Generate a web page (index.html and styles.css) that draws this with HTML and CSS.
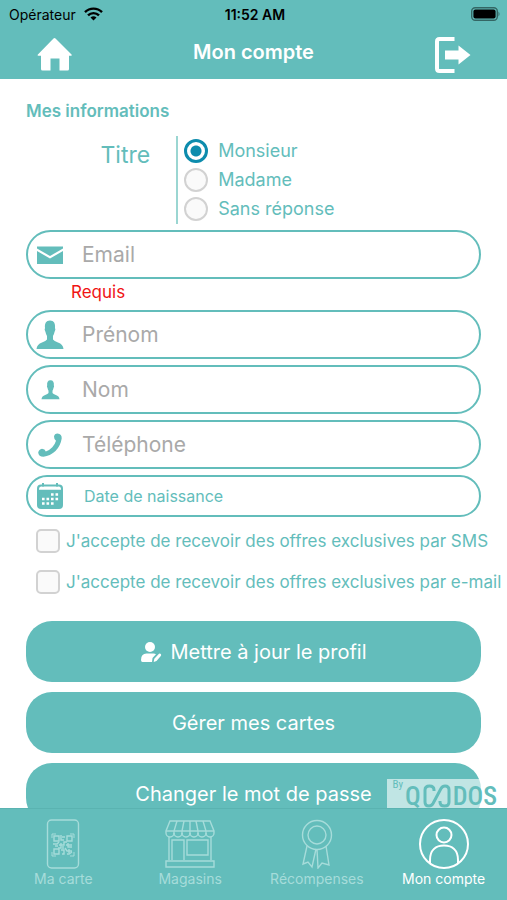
FILE: index.html
```html
<!DOCTYPE html>
<html lang="fr">
<head>
    <meta charset="UTF-8">
    <meta name="viewport" content="width=device-width, initial-scale=1.0">
    <title>Mon compte</title>
    <link rel="stylesheet" href="styles.css">
</head>
<body>

    <header class="header">
        <div class="status-bar">
            <span class="carrier">Opérateur
                <svg width="19" height="14" viewBox="0 0 19 14" aria-hidden="true">
                    <g fill="none" stroke="#000" stroke-width="2.4">
                        <path d="M1 5.2a12 12 0 0 1 17 0"/>
                        <path d="M4 8.4a7.8 7.8 0 0 1 11 0"/>
                    </g>
                    <path d="M9.500 13.600l-3-3a4.300 4.300 0 0 1 6 0z"/>
                </svg>
            </span>
            <span class="time">11:52 AM</span>
            <span class="battery">
                <svg width="30" height="14" viewBox="0 0 30 14" aria-hidden="true">
                    <rect x="0.700" y="0.700" width="25.600" height="12.600" rx="3.500" fill="none" stroke="#346664" stroke-width="1.400"/>
                    <rect x="2.400" y="2.400" width="22.200" height="9.200" rx="2"/>
                    <path d="M27.500 4.500q2 2.500 0 5z" fill="#346664"/>
                </svg>
            </span>
        </div>
        <div class="title-bar">
            <a href="#" class="title-link" aria-label="Accueil">
                <svg width="36" height="36" viewBox="0 0 36 36" fill="#fff">
                    <path d="M19.500 1.500L35.500 17.500q1 1.200-.6 1.200H33V32q0 1.500-1.500 1.500H23.500V21.500H14.500V33.500H6.500q-1.500 0-1.500-1.500V18.700H2.500q-1.600 0-.6-1.200L17.500 1.500q1-1 2 0z"/>
                </svg>
            </a>
            <h1>Mon compte</h1>
            <a href="#" class="title-link" aria-label="Déconnexion">
                <svg width="36" height="36" viewBox="0 0 36 36" fill="#fff">
                    <path d="M19.500 2H4.500Q2 2 2 4.500V31.500Q2 34 4.500 34H19.500" fill="none" stroke="#fff" stroke-width="4"/>
                    <path d="M10 13.500H23.500V8.500L35.500 18L23.500 27.500V22.500H10z"/>
                </svg>
            </a>
        </div>
    </header>

    <main class="content">
        <form id="profileForm">
            <h2>Mes informations</h2>

            <div class="title-group" role="radiogroup" aria-labelledby="titre">
                <span id="titre" class="group-label">Titre</span>
                <div class="radios">
                    <label><input type="radio" name="titre" checked>Monsieur</label>
                    <label><input type="radio" name="titre">Madame</label>
                    <label><input type="radio" name="titre">Sans réponse</label>
                </div>
            </div>

            <div class="field">
                <label for="email" aria-label="Email">
                    <svg width="28" height="28" viewBox="0 0 28 28">
                        <path d="M1 5.500H27V7.500L14 15L1 7.500z"/>
                        <path d="M1 10L14 17.500L27 10V23H1z"/>
                    </svg>
                </label>
                <input type="email" id="email" placeholder="Email">
            </div>
            <p class="error">Requis</p>

            <div class="field">
                <label for="firstName" aria-label="Prénom">
                    <svg width="28" height="30" viewBox="0 0 28 30">
                        <path d="M14 .5C18 .5 19.500 3.500 19 8Q20 9.500 18.500 12Q18 14.500 17 16V19.500Q18 21.200 22 22.500Q27 24 27.500 29H.5Q1 24 6 22.500Q10 21.200 11 19.500V16Q10 14.500 9.500 12Q8 9.500 9 8C8.500 3.500 10 .5 14 .5z"/>
                    </svg>
                </label>
                <input type="text" id="firstName" placeholder="Prénom">
            </div>

            <div class="field">
                <label for="lastName" aria-label="Nom">
                    <svg width="19" height="20" viewBox="0 0 28 30">
                        <path d="M14 .5C18 .5 19.500 3.500 19 8Q20 9.500 18.500 12Q18 14.500 17 16V19.500Q18 21.200 22 22.500Q27 24 27.500 29H.5Q1 24 6 22.500Q10 21.200 11 19.500V16Q10 14.500 9.500 12Q8 9.500 9 8C8.500 3.500 10 .5 14 .5z"/>
                    </svg>
                </label>
                <input type="text" id="lastName" placeholder="Nom">
            </div>

            <div class="field">
                <label for="phone" aria-label="Téléphone">
                    <svg width="26" height="26" viewBox="0 0 26 26">
                        <path d="M17 4.500Q17.500 1.500 20.500 1.500Q25 2 24.700 6.500Q23.500 14 18.500 19Q13 24 6.500 24.700Q1.500 24.700 1.200 20.500Q2 17.200 5 16.800Q8 17 8.800 19.500Q12.500 18.300 15.300 15.300Q18 12.300 19 8.700Q17 7.500 17 4.500z"/>
                    </svg>
                </label>
                <input type="tel" id="phone" placeholder="Téléphone">
            </div>

            <div class="field field-date">
                <label for="birthDate" aria-label="Date de naissance">
                    <svg width="26" height="26" viewBox="0 0 26 26">
                        <rect y="1.500" width="26" height="24.500" rx="4"/>
                        <path d="M2 6.800Q2 3.500 4.500 3.500H21.500Q24 3.500 24 6.800z" fill="#fff"/>
                        <path d="M6 0V3.500M20 0V3.500" stroke="#63bdbb" stroke-width="2"/>
                        <path d="M14 11.500h8M5 16h17M5 20.500h12.500" stroke="#fff" stroke-width="2.600" stroke-dasharray="2.600 1.900"/>
                    </svg>
                </label>
                <input type="text" id="birthDate" placeholder="Date de naissance">
            </div>

            <label class="check"><input type="checkbox">J'accepte de recevoir des offres exclusives par SMS</label>
            <label class="check"><input type="checkbox">J'accepte de recevoir des offres exclusives par e-mail</label>

            <div class="actions">
                <button type="submit">
                    <svg width="22" height="22" viewBox="0 0 22 22" fill="#fff" aria-hidden="true">
                        <circle cx="10" cy="6" r="5"/>
                        <path d="M1 19Q1 12.500 6.500 12.500H13.500Q15 12.500 16 13.200L12.500 17L12 21H2.500Q1 21 1 19z"/>
                        <path d="M13.700 21L14.300 17.800L19 12.800Q20 12 20.800 13Q21.600 14 20.800 15L16.500 20z"/>
                    </svg>
                    Mettre à jour le profil
                </button>
                <button type="button">Gérer mes cartes</button>
                <button type="button">Changer le mot de passe</button>
            </div>
        </form>

        <div class="brand">
            <span class="brand-by">By</span>
            <span>Q</span>
            <svg width="28" height="24" viewBox="0 0 28 24" aria-hidden="true">
                <path d="M11 7V6Q11 2 6.500 2Q2 2 2 6V18Q2 22 6 22Q8.500 22 10 19.500L18 4.500Q19.500 2 22 2Q26 2 26 6V18Q26 22 21.500 22Q17 22 17 18V17" fill="none" stroke="#63bdbb" stroke-width="3"/>
            </svg>
            <span>DOS</span>
        </div>
    </main>

    <nav class="tabs">
        <a href="#">
            <svg width="50" height="50" viewBox="0 0 50 50" aria-hidden="true">
                <rect x="9.500" y="1" width="31" height="48" rx="4"/>
                <path d="M14 19V15H18M32 15H36V19M36 33V37H32M18 37H14V33" stroke-width="1"/>
                <path d="M16 17h5v5h-5zM29 17h5v5h-5zM16 30h5v5h-5z"/>
                <path d="M23 16v5h3M24 18h3M15 25h4l2-2M21 26h5v-3h3M23 24v5h-3M28 26h6M30 24v4h4M23 31h3v4h-2M27 29l2 3h5M29 35h2l3-2M31 30v4M17 27h3M25 27v3"/>
            </svg>
            Ma carte
        </a>
        <a href="#">
            <svg width="50" height="50" viewBox="0 0 50 50" aria-hidden="true">
                <path d="M5 2H45L49 12V14A4 4 0 0 1 41 14A4 4 0 0 1 33 14A4 4 0 0 1 25 14A4 4 0 0 1 17 14A4 4 0 0 1 9 14A4 4 0 0 1 1 14V12z"/>
                <path d="M1 12H49M12 2L9 12V15M19 2L17 12V15M25 2V15M31 2L33 12V15M38 2L41 12V15"/>
                <path d="M4 18V41M46 18V41M7 41V21H19V41M22 21H43V36H22zM1 42H49V48H1z"/>
            </svg>
            Magasins
        </a>
        <a href="#">
            <svg width="50" height="50" viewBox="0 0 50 50" aria-hidden="true">
                <circle cx="25" cy="16" r="14.500"/>
                <circle cx="25" cy="16" r="9"/>
                <path d="M15 27L11 45L16 43L20 48L24 30M25 30L26 49L30 44L37 46L34 27"/>
            </svg>
            Récompenses
        </a>
        <a href="#" class="active">
            <svg width="50" height="50" viewBox="0 0 50 50" aria-hidden="true">
                <circle cx="25" cy="25" r="24"/>
                <circle cx="25" cy="16" r="7.500"/>
                <path d="M11 44.500V41C11 31 17 26.500 25 26.500S39 31 39 41V44.500"/>
            </svg>
            Mon compte
        </a>
    </nav>

</body>
</html>
```

FILE: styles.css
```css
* {
    box-sizing: border-box;
}

body {
    margin: 0;
    height: 100vh;
    display: flex;
    flex-direction: column;
    font-family: Inter, "Liberation Sans", sans-serif;
    color: #63bdbb;
    background-color: white;
}

svg {
    flex-shrink: 0;
}

.header {
    flex-shrink: 0;
    background-color: #63bdbb;
    padding-bottom: 4px;
}

.status-bar {
    display: grid;
    grid-template-columns: 1fr auto 1fr;
    align-items: center;
    height: 28px;
    padding: 0 6px 0 9px;
    font-size: 14px;
    color: black;
}

.carrier {
    display: flex;
    align-items: center;
    gap: 8px;
}

.time {
    font-weight: 600;
}

.battery {
    display: flex;
    justify-content: flex-end;
}

.title-bar {
    display: flex;
    align-items: center;
    justify-content: space-between;
    height: 47px;
    padding: 0 36px;
}

.title-link {
    display: flex;
    padding-top: 6px;
}

h1 {
    margin: 0;
    font-size: 20px;
    font-weight: 600;
    color: white;
}

.content {
    position: relative;
    flex: 1;
    min-height: 0;
    overflow: hidden;
    padding: 20px 26px 0;
}

h2 {
    margin: 0 0 13px;
    font-size: 17px;
    line-height: 24px;
    font-weight: 600;
}

.title-group {
    display: flex;
    height: 88px;
    margin-bottom: 6px;
}

.group-label {
    width: 33%;
    padding: 4px 26px 0 0;
    text-align: right;
    font-size: 23px;
    line-height: 30px;
}

.radios {
    border-left: 2px solid #9bd6d2;
    padding-left: 6px;
}

.radios label {
    display: flex;
    align-items: center;
    gap: 10px;
    height: 29px;
    font-size: 18px;
}

.radios input, .check input {
    appearance: none;
    flex-shrink: 0;
    width: 24px;
    height: 24px;
    margin: 0;
    border: 2px solid #d2d2d2;
    background-color: #fafafa;
}

.radios input {
    border-radius: 50%;
}

.radios input:checked {
    border: 3px solid #0d8cad;
    background: radial-gradient(circle, #0d8cad 5px, white 6px);
}

.field {
    display: flex;
    align-items: center;
    height: 49px;
    margin-bottom: 6px;
    border: 2px solid #63bdbb;
    border-radius: 25px;
}

.field label {
    display: flex;
    justify-content: center;
    width: 44px;
    fill: #63bdbb;
}

.field input {
    flex: 1;
    min-width: 0;
    padding: 0 20px 0 10px;
    border: none;
    outline: none;
    background: none;
    font: inherit;
    font-size: 21px;
}

.field input::placeholder {
    color: #a9a9a9;
}

.field-date {
    height: 42px;
}

.field-date input {
    padding-left: 12px;
    font-size: 16px;
}

.field-date input::placeholder {
    color: #63bdbb;
}

.error {
    margin: -3px 0 8px 45px;
    font-size: 17px;
    line-height: 20px;
    color: #f01414;
}

.check {
    display: flex;
    align-items: center;
    gap: 6px;
    height: 36px;
    margin: 0 -20px 5px 10px;
    font-size: 17px;
    white-space: nowrap;
}

.check input {
    border-radius: 5px;
}

.actions {
    display: flex;
    flex-direction: column;
    gap: 10px;
    padding-top: 16px;
}

.actions button {
    display: flex;
    align-items: center;
    justify-content: center;
    gap: 8px;
    height: 61px;
    border: none;
    border-radius: 26px;
    background-color: #63bdbb;
    color: white;
    font-family: inherit;
    font-size: 20px;
    cursor: pointer;
}

.brand {
    position: absolute;
    right: 0;
    bottom: 0;
    display: flex;
    align-items: flex-end;
    gap: 2px;
    height: 29px;
    padding: 0 10px 0 6px;
    background-color: rgba(255, 255, 255, 0.6);
    font-family: "Roboto Condensed", Roboto, sans-serif;
    font-size: 26px;
    line-height: 24px;
    font-weight: 500;
}

.brand-by {
    align-self: flex-start;
    font-size: 11px;
    line-height: 12px;
    font-weight: normal;
}

.tabs {
    flex-shrink: 0;
    display: grid;
    grid-template-columns: repeat(4, 1fr);
    height: 92px;
    padding-top: 10px;
    background-color: #63bdbb;
    border-top: 1px solid #5ab3b1;
}

.tabs a {
    display: flex;
    flex-direction: column;
    align-items: center;
    font-size: 14px;
    line-height: 20px;
    color: #a6dcda;
    text-decoration: none;
}

.tabs svg {
    fill: none;
    stroke: currentColor;
    stroke-width: 1.4;
}

.tabs .active {
    color: white;
}

.tabs .active svg {
    stroke-width: 2;
}
```
